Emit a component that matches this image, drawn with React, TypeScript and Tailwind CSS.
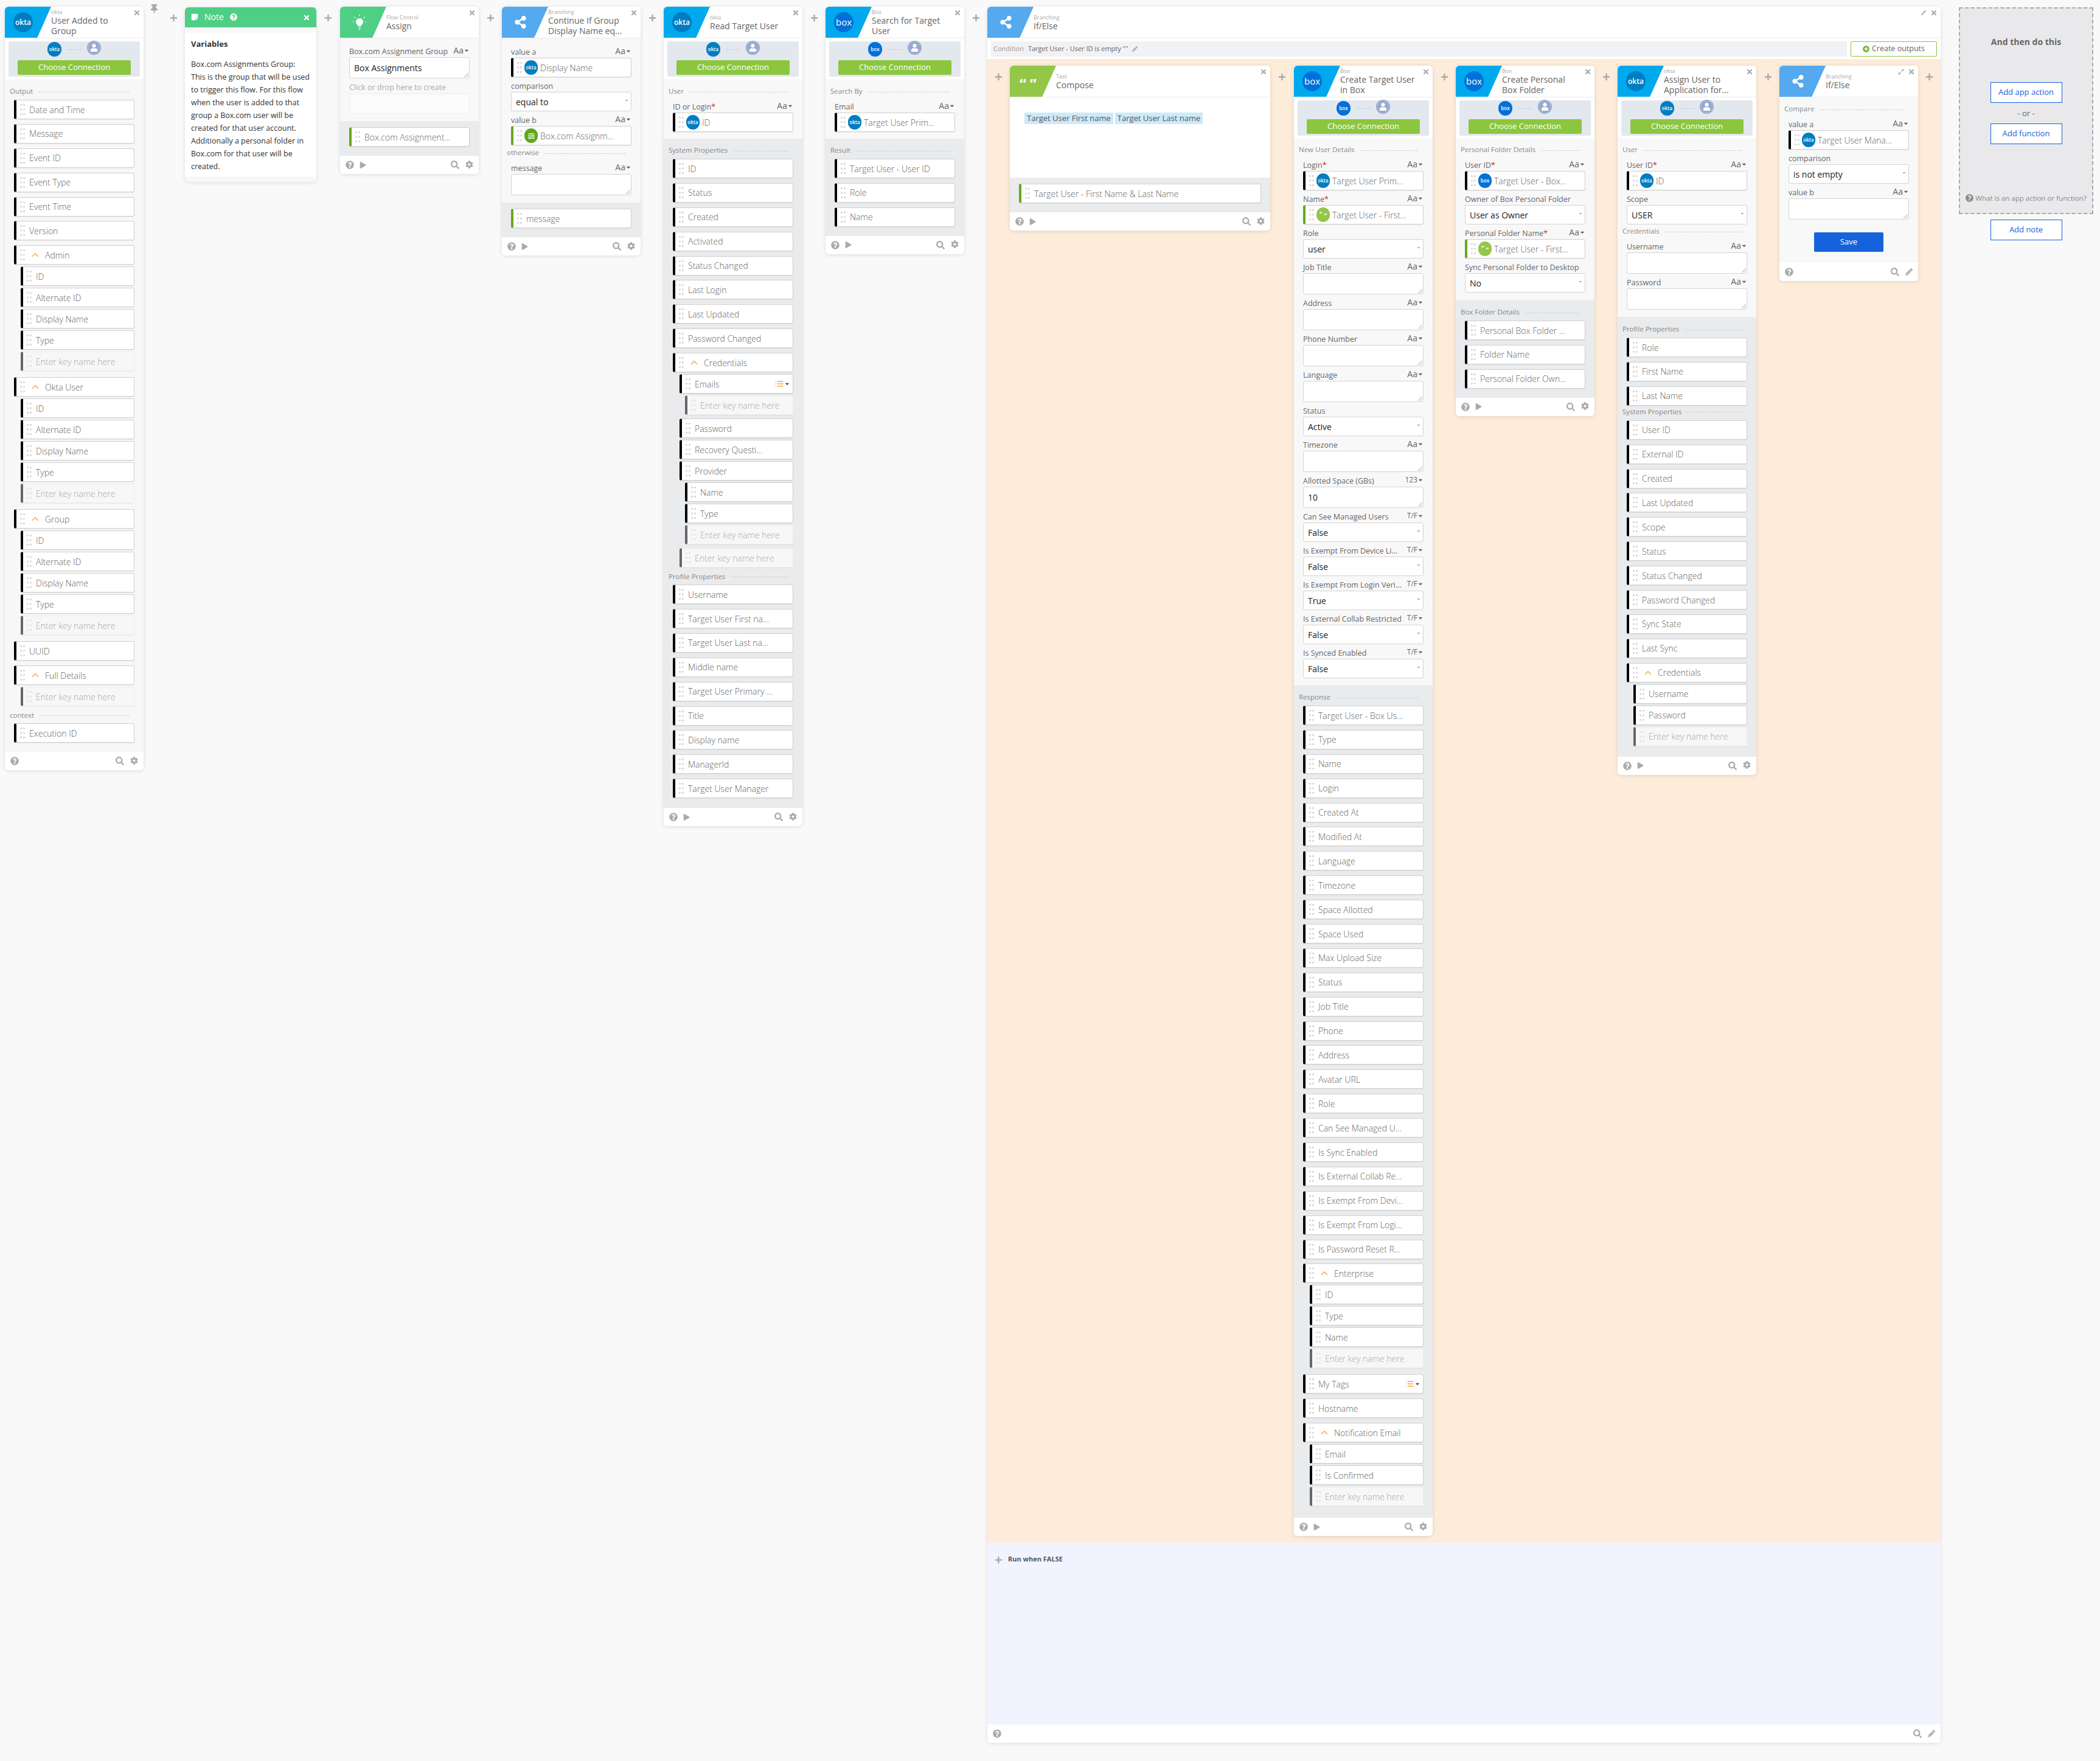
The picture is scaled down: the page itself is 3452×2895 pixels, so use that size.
import React from 'react';
import {
  FaCaretDown, FaCog, FaCompressAlt, FaExpandAlt, FaPencilAlt, FaPlay, FaPlus,
  FaPlusCircle, FaQuestionCircle, FaSearch, FaShareAlt, FaSlidersH, FaStickyNote, FaThumbtack, FaTimes, FaUser,
} from 'react-icons/fa';
import { FiChevronUp, FiList } from 'react-icons/fi';

type Kind = 'okta' | 'box' | 'text' | 'assign';
type Row = { t: string; l?: number; p?: boolean; e?: boolean; list?: boolean };

function Plus({ w }: { w: string }) {
  return (
    <div className={`${w} shrink-0 flex justify-center pt-[12px]`}>
      <FaPlus className="text-[#aaaaaa] text-[13px]" />
    </div>
  );
}

function Dots({ light }: { light?: boolean }) {
  const c = light ? '#e0e0e0' : '#cfcfcf';
  return (
    <svg width="8" height="18" viewBox="0 0 8 18" className="shrink-0">
      {[1.5, 9, 16.5].map((y) => [1.5, 6.5].map((x) => <circle key={`${x}-${y}`} cx={x} cy={y} r="1.4" fill={c} />))}
    </svg>
  );
}

function Logo({ kind, size }: { kind: Kind; size: 'lg' | 'md' | 'sm' }) {
  const sz = size === 'lg' ? 'w-[32px] h-[33px] text-[12px]' : size === 'md' ? 'w-[23px] h-[24px] text-[8px]' : 'w-[22px] h-[24px] text-[8px]';
  if (kind === 'text') {
    return (
      <div className={`${sz} rounded-full bg-[#94c64a] text-white flex items-center justify-center font-bold shrink-0`}>
        <span className="text-[10px] leading-none -mt-[3px]">“</span>
        <span className="text-[10px] leading-none mt-[4px] ml-[3px]">”</span>
      </div>
    );
  }
  if (kind === 'assign') {
    return (
      <div className={`${sz} rounded-full bg-[#5fa81c] text-white flex items-center justify-center shrink-0`}>
        <FaSlidersH className="text-[11px]" />
      </div>
    );
  }
  const bg = kind === 'okta' ? 'bg-[#007dc1]' : 'bg-[#0071d8]';
  const tx = kind === 'box' && size === 'lg' ? 'text-[15px] font-normal' : 'font-semibold';
  return (
    <div className={`${sz} ${bg} ${tx} rounded-full text-white flex items-center justify-center shrink-0`}>
      {kind}
    </div>
  );
}

function Header({ vendor, title, color, icon, close = true, extra }: { vendor: string; title: string[]; color: string; icon: React.ReactNode; close?: boolean; extra?: React.ReactNode }) {
  return (
    <div className="relative h-[52px] bg-white border-b border-[#ececec] rounded-t-[6px] overflow-hidden flex shrink-0">
      <div className={`${color} w-[76px] h-full [clip-path:polygon(0_0,100%_0,70%_100%,0_100%)] flex items-center pl-[14px]`}>{icon}</div>
      <div className="flex flex-col justify-center whitespace-nowrap">
        <div className="text-[9px] leading-[11px] text-[#aaaaaa]">{vendor}</div>
        {title.map((x) => (
          <div key={x} className="text-[14px] leading-[17px] text-[#666666]">{x}</div>
        ))}
      </div>
      <div className="absolute right-[5px] top-[4px] flex items-center gap-[6px]">
        {extra}
        {close && <FaTimes className="text-[#aaaaaa] text-[12px]" />}
      </div>
    </div>
  );
}

function Connection({ kind }: { kind: 'okta' | 'box' }) {
  return (
    <div className="bg-white px-[6px] pt-[5px] pb-[4px]">
      <div className="h-[58px] bg-[#e3e7ee] rounded-[2px] flex flex-col items-center">
        <div className="h-[31px] pb-[5px] flex items-center gap-[9px]">
          <Logo kind={kind} size="md" />
          <div className="w-[24px] border-t border-dashed border-[#c3c9d6]" />
          <div className="w-[23px] h-[23px] rounded-full bg-white border-[2px] border-[#93a8cc] overflow-hidden flex items-end justify-center -mt-[5px]">
            <div className="w-[19px] h-[19px] rounded-full bg-[#93a8cc] flex items-center justify-center">
              <FaUser className="text-white text-[13px]" />
            </div>
          </div>
        </div>
        <div className="w-[186px] h-[24px] rounded-[2px] bg-[#8cc63f] text-white text-[13px] leading-[22px] text-center">Choose Connection</div>
      </div>
    </div>
  );
}

function Footer({ play = true, pencil, tools = true }: { play?: boolean; pencil?: boolean; tools?: boolean }) {
  return (
    <div className="h-[30px] bg-white rounded-b-[6px] flex items-center px-[9px] text-[#aaaaaa] shrink-0">
      <FaQuestionCircle className="text-[14px]" />
      {play && <FaPlay className="text-[11px] ml-[9px]" />}
      {tools && <FaSearch className="text-[14px] ml-auto" />}
      {tools && (pencil ? <FaPencilAlt className="text-[12px] ml-[10px]" /> : <FaCog className="text-[13px] ml-[10px] -mt-[2px]" />)}
    </div>
  );
}

function Field({ t, level = 0, bar = 'black', logo, parent, enter, list }: { t: string; level?: number; bar?: 'black' | 'green'; logo?: Kind; parent?: boolean; enter?: boolean; list?: boolean }) {
  const indent = level === 0 ? '' : level === 1 ? 'ml-[11px]' : 'ml-[20px]';
  const barCls = enter ? 'border-l-[#666666]' : bar === 'green' ? 'border-l-[#66a81c]' : 'border-l-black';
  const bg = enter ? 'bg-[#f7f7f7] border-[#eeeeee]' : 'bg-white border-[#cfcfcf]';
  const txt = enter ? 'text-[#aaaaaa]' : 'text-[#666666]';
  return (
    <div className={`${indent} ${bg} ${barCls} h-[32px] rounded-[3px] border border-l-[4px] flex items-center pl-[6px] pr-[4px] gap-[4px] shadow-[0_1px_1px_rgba(0,0,0,0.06)]`}>
      <Dots light={enter} />
      {logo && <Logo kind={logo} size="sm" />}
      {parent && <FiChevronUp className="text-[#f5a742] text-[18px] ml-[4px]" />}
      <span className={`${txt} ${logo ? '' : 'ml-[3px]'} text-[14px] font-light whitespace-nowrap`}>{t}</span>
      {list && (
        <div className="ml-auto flex items-center">
          <FiList className="text-[#f5a742] text-[16px]" />
          <FaCaretDown className="text-[#555555] text-[10px]" />
        </div>
      )}
    </div>
  );
}

function Rows({ rows }: { rows: Row[] }) {
  return (
    <div>
      {rows.map((r, i) => {
        const l = r.l ?? 0;
        const pl = i > 0 ? rows[i - 1].l ?? 0 : 0;
        let mt = '';
        if (i > 0) {
          if (l > pl) mt = 'mt-[3px]';
          else if (l === pl) mt = l === 0 ? 'mt-[7.9px]' : 'mt-[3px]';
          else mt = l === 0 ? 'mt-[10px]' : 'mt-[6px]';
        }
        return (
          <div key={i} className={mt}>
            <Field t={r.t} level={l} parent={r.p} enter={r.e} list={r.list} />
          </div>
        );
      })}
    </div>
  );
}

function Sec({ t, tight }: { t: string; tight?: boolean }) {
  return (
    <div className={`${tight ? 'mb-[3px]' : 'mb-[6px]'} -ml-[7px] mr-[9px] h-[16px] flex items-center gap-[9px]`}>
      <span className="text-[#888888] text-[11.5px] whitespace-nowrap">{t}</span>
      <div className="flex-1 border-t border-dashed border-[#cccccc] mt-[2px]" />
    </div>
  );
}

function Lab({ t, req, a }: { t: string; req?: boolean; a?: string }) {
  return (
    <div className="h-[24px] flex items-end justify-between text-[#666666]">
      <span className="text-[12.5px] leading-[18px] whitespace-nowrap">
        {t}
        {req && <span className="text-[#e01b1b]">*</span>}
      </span>
      {a && (
        <span className={`${a === 'Aa' ? 'text-[14px]' : 'text-[12px]'} leading-[22px] flex items-center`}>
          {a}
          <FaCaretDown className="text-[#666666] text-[10px]" />
        </span>
      )}
    </div>
  );
}

function Sel({ t }: { t: string }) {
  return (
    <div className="relative h-[32px] bg-white border border-[#d4d4d4] rounded-[3px] flex items-center pl-[7px] text-[14px] text-[#222222] whitespace-nowrap">
      {t}
      <FaCaretDown className="absolute right-[3px] top-[9px] text-[#aaaaaa] text-[8px]" />
    </div>
  );
}

function Area({ t }: { t?: string }) {
  return (
    <div className="relative h-[35px] bg-white border border-[#d4d4d4] rounded-[3px] flex items-center pl-[7px] text-[14px] text-[#222222]">
      {t}
      <svg width="8" height="8" viewBox="0 0 8 8" className="absolute right-[1px] bottom-[1px]">
        <path d="M1 8 L8 1 M4.5 8 L8 4.5" stroke="#888888" strokeWidth="0.8" />
      </svg>
    </div>
  );
}

function Card({ children, w = 'w-[228px]' }: { children: React.ReactNode; w?: string }) {
  return <div className={`${w} shrink-0 rounded-[6px] bg-white shadow-[0_1px_6px_rgba(0,0,0,0.12)] flex flex-col`}>{children}</div>;
}

const Body = ({ children, dark, cls }: { children: React.ReactNode; dark?: boolean; cls: string }) => (
  <div className={`${dark ? 'bg-[#eaebed]' : 'bg-[#f8f8f9]'} ${cls} px-[15px]`}>{children}</div>
);

const r = (list: string[]): Row[] => list.map((t) => ({ t }));

const sub = (name: string, children: string[]): Row[] => [
  { t: name, p: true },
  ...children.map((t) => ({ t, l: 1 })),
  { t: 'Enter key name here', l: 1, e: true },
];

const noteLines = [
  'Box.com Assignments Group:',
  'This is the group that will be used',
  'to trigger this flow. For this flow',
  'when the user is added to that',
  'group a Box.com user will be',
  'created for that user account.',
  'Additionally a personal folder in',
  'Box.com for that user will be',
  'created.',
];

const shareIcon = <FaShareAlt className="text-white text-[21px] ml-[6px]" />;

function Bulb() {
  return (
    <svg width="24" height="28" viewBox="0 0 24 28" className="ml-[6px]">
      <path d="M12 7a6 6 0 0 0-6 6c0 2.4 1.4 3.6 2.5 5 .5.7.7 1.3.8 2h5.4c.1-.7.3-1.3.8-2 1.1-1.4 2.5-2.6 2.5-5a6 6 0 0 0-6-6z" fill="#fff" />
      <path d="M10 22h4M10.5 24h3M10.5 26h2" stroke="#fff" strokeWidth="1.2" />
      <path d="M12 1v2.5M3.5 5l1.8 1.8M20.5 5l-1.8 1.8M1 13h2M21 13h2" stroke="#fff" strokeWidth="1.2" />
    </svg>
  );
}

export default function App() {
  const okta = <Logo kind="okta" size="lg" />;
  const box = <Logo kind="box" size="lg" />;
  return (
    <div className="min-h-screen w-[3452px] h-[2895px] bg-[#f9f9f9] font-['Open_Sans',sans-serif] flex items-start pl-[8px] pt-[11px]">
      {/* trigger */}
      <Card>
        <Header vendor="okta" title={['User Added to', 'Group']} color="bg-[#00a9ee]" icon={okta} />
        <Connection kind="okta" />
        <div className="bg-[#f7f7f7] pt-[12px] pb-[15px] px-[15px]">
          <Sec t="Output" />
          <Rows
            rows={[
              ...r(['Date and Time', 'Message', 'Event ID', 'Event Type', 'Event Time', 'Version']),
              ...sub('Admin', ['ID', 'Alternate ID', 'Display Name', 'Type']),
              ...sub('Okta User', ['ID', 'Alternate ID', 'Display Name', 'Type']),
              ...sub('Group', ['ID', 'Alternate ID', 'Display Name', 'Type']),
              { t: 'UUID' },
              { t: 'Full Details', p: true },
              { t: 'Enter key name here', l: 1, e: true },
            ]}
          />
          <div className="mt-[6px]">
            <Sec t="context" />
          </div>
          <Field t="Execution ID" />
        </div>
        <Footer play={false} />
      </Card>

      <div className="w-[68px] shrink-0 flex">
        <div className="w-[35px] flex justify-center -mt-[4px]">
          <FaThumbtack className="text-[#aaaaaa] text-[15px]" />
        </div>
        <div className="w-[28px] flex justify-center pt-[12px]">
          <FaPlus className="text-[#aaaaaa] text-[13px]" />
        </div>
      </div>

      {/* note */}
      <div className="w-[216px] shrink-0 mt-[1px] rounded-[6px] shadow-[0_1px_6px_rgba(0,0,0,0.12)] bg-[#f8f8f8] pb-[9px]">
        <div className="relative h-[33px] bg-[#4fce85] rounded-t-[6px] flex items-center pl-[10px] pb-[2px] text-white">
          <FaStickyNote className="text-[12px]" />
          <span className="ml-[10px] text-[14px]">Note</span>
          <FaQuestionCircle className="ml-[10px] text-[12px]" />
          <FaTimes className="absolute right-[10px] top-[11px] text-[12px]" />
        </div>
        <div className="mt-[9px] bg-white px-[10px] pt-[8px] pb-[6px] h-[236px] text-[12.5px] leading-[21px] text-[#333333] whitespace-nowrap">
          <div className="font-bold text-[13px] mb-[12px]">Variables</div>
          {noteLines.map((x) => (
            <div key={x}>{x}</div>
          ))}
        </div>
      </div>

      <Plus w="w-[39px]" />

      {/* assign */}
      <Card>
        <Header vendor="Flow Control" title={['Assign']} color="bg-[#4fce85]" icon={<Bulb />} />
        <Body cls="pt-[7px] pb-[12px]">
          <Lab t="Box.com Assignment Group" a="Aa" />
          <Area t="Box Assignments" />
          <div className="mt-[6px] h-[18px] text-[12.5px] leading-[18px] text-[#aaaaaa]">Click or drop here to create</div>
          <div className="h-[33px] bg-[#fbfbfb] border border-[#eeeeee] mt-[1px]" />
        </Body>
        <Body dark cls="pt-[10px] pb-[15px]">
          <Field t="Box.com Assignment..." bar="green" />
        </Body>
        <Footer />
      </Card>

      <Plus w="w-[38px]" />

      {/* continue if */}
      <Card>
        <Header vendor="Branching" title={['Continue If Group', 'Display Name eq...']} color="bg-[#54a9ef]" icon={shareIcon} />
        <Body cls="pt-[8px] pb-[12px]">
          <Lab t="value a" a="Aa" />
          <Field t="Display Name" logo="okta" />
          <Lab t="comparison" />
          <Sel t="equal to" />
          <Lab t="value b" a="Aa" />
          <Field t="Box.com Assignm..." logo="assign" bar="green" />
          <div className="mt-[4px]">
            <Sec t="otherwise" tight />
          </div>
          <Lab t="message" a="Aa" />
          <Area />
        </Body>
        <Body dark cls="pt-[10px] pb-[15px]">
          <Field t="message" bar="green" />
        </Body>
        <Footer />
      </Card>

      <Plus w="w-[38px]" />

      {/* read target */}
      <Card>
        <Header vendor="okta" title={['Read Target User']} color="bg-[#00a9ee]" icon={okta} />
        <Connection kind="okta" />
        <Body cls="pt-[12px] pb-[11px]">
          <Sec t="User" tight />
          <Lab t="ID or Login" req a="Aa" />
          <Field t="ID" logo="okta" />
        </Body>
        <Body dark cls="pt-[11px] pb-[16px]">
          <Sec t="System Properties" />
          <Rows
            rows={[
              ...r(['ID', 'Status', 'Created', 'Activated', 'Status Changed', 'Last Login', 'Last Updated', 'Password Changed']),
              { t: 'Credentials', p: true },
              { t: 'Emails', l: 1, list: true },
              { t: 'Enter key name here', l: 2, e: true },
              { t: 'Password', l: 1 },
              { t: 'Recovery Questi...', l: 1 },
              { t: 'Provider', l: 1 },
              { t: 'Name', l: 2 },
              { t: 'Type', l: 2 },
              { t: 'Enter key name here', l: 2, e: true },
              { t: 'Enter key name here', l: 1, e: true },
            ]}
          />
          <div className="mt-[6px]">
            <Sec t="Profile Properties" />
          </div>
          <Rows rows={r(['Username', 'Target User First na...', 'Target User Last na...', 'Middle name', 'Target User Primary ...', 'Title', 'Display name', 'ManagerId', 'Target User Manager'])} />
        </Body>
        <Footer />
      </Card>

      <Plus w="w-[38px]" />

      {/* search */}
      <Card>
        <Header vendor="Box" title={['Search for Target', 'User']} color="bg-[#00a9ee]" icon={box} />
        <Connection kind="box" />
        <Body cls="pt-[12px] pb-[11px]">
          <Sec t="Search By" tight />
          <Lab t="Email" a="Aa" />
          <Field t="Target User Prim..." logo="okta" />
        </Body>
        <Body dark cls="pt-[11px] pb-[15px]">
          <Sec t="Result" />
          <Rows rows={r(['Target User - User ID', 'Role', 'Name'])} />
        </Body>
        <Footer />
      </Card>

      <Plus w="w-[38px]" />

      {/* big if/else */}
      <Card w="w-[1567px]">
        <Header
          vendor="Branching"
          title={['If/Else']}
          color="bg-[#54a9ef]"
          icon={shareIcon}
          extra={<FaCompressAlt className="text-[#aaaaaa] text-[10px]" />}
        />
        <div className="bg-white flex px-[6px] pt-[5px] pb-[4px] gap-[6px]">
          <div className="flex-1 h-[25px] bg-[#f1f2f5] flex items-center pl-[4px] text-[11px] text-[#666666] whitespace-nowrap">
            <span className="text-[#999999] mr-[7px]">Condition</span>
            Target User - User ID is empty ""
            <FaPencilAlt className="text-[#aaaaaa] text-[9px] ml-[7px]" />
          </div>
          <div className="w-[142px] h-[25px] bg-white border border-[#8cc63f] rounded-[2px] flex items-center justify-center gap-[4px] text-[12.5px] text-[#666666]">
            <FaPlusCircle className="text-[#6cb52d] text-[11px]" />
            Create outputs
          </div>
        </div>

        <div className="bg-[#fdecd9] flex items-start py-[11px]">
          <Plus w="w-[37px]" />

          <Card w="w-[428px]">
            <Header vendor="Text" title={['Compose']} color="bg-[#94c64a]" icon={<span className="text-white text-[24px] font-bold leading-none pl-[2px] pt-[8px]">“ ”</span>} />
            <div className="bg-white h-[132px] pl-[24px] pt-[25px] flex items-start gap-[3px] text-[13px] text-[#555555]">
              <span className="bg-[#cdeafa] h-[19px] leading-[19px] px-[4px]">Target User First name</span>
              <span className="bg-[#cdeafa] h-[19px] leading-[19px] px-[4px]">Target User Last name</span>
            </div>
            <Body dark cls="pt-[10px] pb-[15px]">
              <Field t="Target User - First Name & Last Name" bar="green" />
            </Body>
            <Footer />
          </Card>

          <Plus w="w-[39px]" />

          {/* create target */}
          <Card>
            <Header vendor="Box" title={['Create Target User', 'in Box']} color="bg-[#00a9ee]" icon={box} />
            <Connection kind="box" />
            <Body cls="pt-[11px] pb-[12px]">
              <Sec t="New User Details" tight />
              <Lab t="Login" req a="Aa" />
              <Field t="Target User Prim..." logo="okta" />
              <Lab t="Name" req a="Aa" />
              <Field t="Target User - First..." logo="text" bar="green" />
              <Lab t="Role" />
              <Sel t="user" />
              <Lab t="Job Title" a="Aa" />
              <Area />
              <Lab t="Address" a="Aa" />
              <Area />
              <Lab t="Phone Number" a="Aa" />
              <Area />
              <Lab t="Language" a="Aa" />
              <Area />
              <Lab t="Status" />
              <Sel t="Active" />
              <Lab t="Timezone" a="Aa" />
              <Area />
              <Lab t="Allotted Space (GBs)" a="123" />
              <Area t="10" />
              <Lab t="Can See Managed Users" a="T/F" />
              <Sel t="False" />
              <Lab t="Is Exempt From Device Li..." a="T/F" />
              <Sel t="False" />
              <Lab t="Is Exempt From Login Veri..." a="T/F" />
              <Sel t="True" />
              <Lab t="Is External Collab Restricted" a="T/F" />
              <Sel t="False" />
              <Lab t="Is Synced Enabled" a="T/F" />
              <Sel t="False" />
            </Body>
            <Body dark cls="pt-[11px] pb-[19px]">
              <Sec t="Response" />
              <Rows
                rows={[
                  ...r(['Target User - Box Us...', 'Type', 'Name', 'Login', 'Created At', 'Modified At', 'Language', 'Timezone', 'Space Allotted', 'Space Used', 'Max Upload Size', 'Status', 'Job Title', 'Phone', 'Address', 'Avatar URL', 'Role', 'Can See Managed U...', 'Is Sync Enabled', 'Is External Collab Re...', 'Is Exempt From Devi...', 'Is Exempt From Logi...', 'Is Password Reset R...']),
                  { t: 'Enterprise', p: true },
                  { t: 'ID', l: 1 },
                  { t: 'Type', l: 1 },
                  { t: 'Name', l: 1 },
                  { t: 'Enter key name here', l: 1, e: true },
                  { t: 'My Tags', list: true },
                  { t: 'Hostname' },
                  { t: 'Notification Email', p: true },
                  { t: 'Email', l: 1 },
                  { t: 'Is Confirmed', l: 1 },
                  { t: 'Enter key name here', l: 1, e: true },
                ]}
              />
            </Body>
            <Footer />
          </Card>

          <Plus w="w-[38px]" />

          {/* personal folder */}
          <Card>
            <Header vendor="Box" title={['Create Personal', 'Box Folder']} color="bg-[#00a9ee]" icon={box} />
            <Connection kind="box" />
            <Body cls="pt-[11px] pb-[12px]">
              <Sec t="Personal Folder Details" tight />
              <Lab t="User ID" req a="Aa" />
              <Field t="Target User - Box..." logo="box" />
              <Lab t="Owner of Box Personal Folder" />
              <Sel t="User as Owner" />
              <Lab t="Personal Folder Name" req a="Aa" />
              <Field t="Target User - First..." logo="text" bar="green" />
              <Lab t="Sync Personal Folder to Desktop" />
              <Sel t="No" />
            </Body>
            <Body dark cls="pt-[12px] pb-[15px]">
              <Sec t="Box Folder Details" />
              <Rows rows={r(['Personal Box Folder ...', 'Folder Name', 'Personal Folder Own...'])} />
            </Body>
            <Footer />
          </Card>

          <Plus w="w-[38px]" />

          {/* assign user */}
          <Card>
            <Header vendor="okta" title={['Assign User to', 'Application for...']} color="bg-[#00a9ee]" icon={okta} />
            <Connection kind="okta" />
            <Body cls="pt-[11px] pb-[12px]">
              <Sec t="User" tight />
              <Lab t="User ID" req a="Aa" />
              <Field t="ID" logo="okta" />
              <Lab t="Scope" />
              <Sel t="USER" />
              <div className="mt-[3px]">
                <Sec t="Credentials" tight />
              </div>
              <Lab t="Username" a="Aa" />
              <Area />
              <Lab t="Password" a="Aa" />
              <Area />
            </Body>
            <Body dark cls="pt-[12px] pb-[17px]">
              <Sec t="Profile Properties" />
              <Rows rows={r(['Role', 'First Name', 'Last Name'])} />
              <div className="mt-[2px]">
                <Sec t="System Properties" />
              </div>
              <Rows
                rows={[
                  ...r(['User ID', 'External ID', 'Created', 'Last Updated', 'Scope', 'Status', 'Status Changed', 'Password Changed', 'Sync State', 'Last Sync']),
                  { t: 'Credentials', p: true },
                  { t: 'Username', l: 1 },
                  { t: 'Password', l: 1 },
                  { t: 'Enter key name here', l: 1, e: true },
                ]}
              />
            </Body>
            <Footer />
          </Card>

          <Plus w="w-[38px]" />

          {/* inner if/else */}
          <Card>
            <Header
              vendor="Branching"
              title={['If/Else']}
              color="bg-[#54a9ef]"
              icon={shareIcon}
              extra={<FaExpandAlt className="text-[#aaaaaa] text-[10px]" />}
            />
            <Body cls="pt-[11px] pb-[18px]">
              <Sec t="Compare" tight />
              <Lab t="value a" a="Aa" />
              <Field t="Target User Mana..." logo="okta" />
              <Lab t="comparison" />
              <Sel t="is not empty" />
              <Lab t="value b" a="Aa" />
              <Area />
              <div className="mt-[21px] mx-auto w-[114px] h-[32px] rounded-[2px] bg-[#1662dd] text-white text-[13px] leading-[30px] text-center">Save</div>
            </Body>
            <Footer play={false} pencil />
          </Card>

          <Plus w="w-[37px]" />
        </div>

        <div className="h-[299px] bg-[#f1f4fe] flex items-start pt-[19px] pl-[12px]">
          <FaPlus className="text-[#aaaaaa] text-[13px] mt-[3px]" />
          <span className="ml-[9px] text-[11px] font-bold text-[#555555]">Run when FALSE</span>
        </div>
        <Footer play={false} pencil />
      </Card>

      {/* right */}
      <div className="ml-[30px] w-[221px] shrink-0 mt-[1px] flex flex-col items-center">
        <div className="w-full h-[340px] border-2 border-dashed border-[#aaaaaa] bg-[#e9e9ec] flex flex-col items-center pt-[45px]">
          <div className="text-[14px] font-bold text-[#666666] leading-[20px]">And then do this</div>
          <div className="mt-[56px] w-[118px] h-[34px] border border-[#1662dd] bg-white text-[#1662dd] text-[13px] leading-[30px] text-center">Add app action</div>
          <div className="h-[34px] leading-[34px] text-[13px] text-[#666666]">- or -</div>
          <div className="w-[118px] h-[34px] border border-[#1662dd] bg-white text-[#1662dd] text-[13px] leading-[30px] text-center">Add function</div>
          <div className="mt-auto mb-[16px] flex items-center gap-[3px] text-[11.5px] text-[#888888] whitespace-nowrap">
            <FaQuestionCircle className="text-[13px]" />
            What is an app action or function?
          </div>
        </div>
        <div className="mt-[9px] w-[118px] h-[34px] border border-[#1662dd] bg-white text-[#1662dd] text-[13px] leading-[30px] text-center">Add note</div>
      </div>
    </div>
  );
}
